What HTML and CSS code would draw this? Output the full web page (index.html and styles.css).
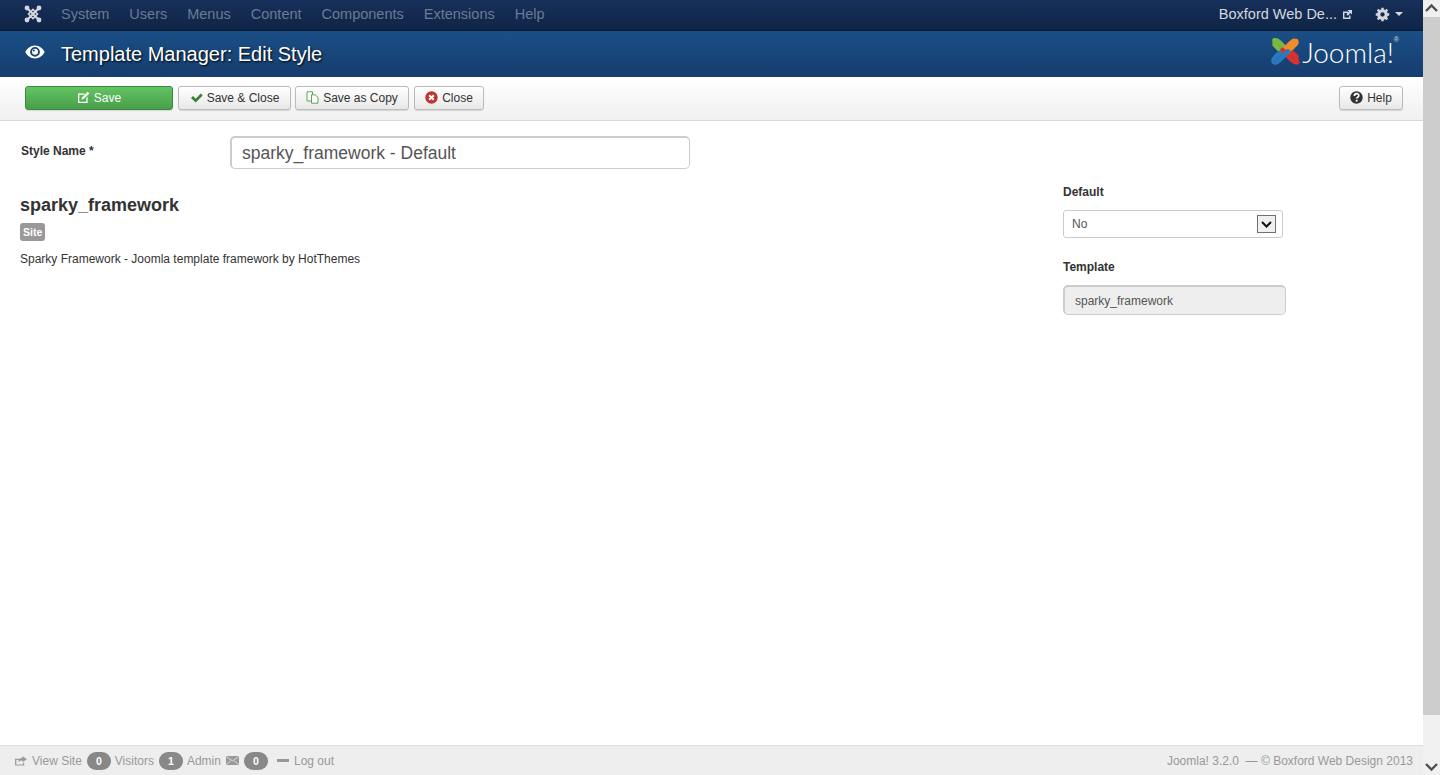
FILE: index.html
```html
<!DOCTYPE html>
<html lang="en">
<head>
<meta charset="utf-8">
<title>Template Manager: Edit Style</title>
<link rel="stylesheet" href="styles.css">
</head>
<body>
<div class="window">
  <div class="page">
    <nav class="navbar">
      <svg class="nav-logo" viewBox="0 0 18 18" width="18" height="18"><g fill="none" stroke="#d4d8de" stroke-width="2.2"><path d="M3 3l12 12M15 3L3 15"/><path d="M9 4.5L13.5 9 9 13.5 4.5 9z" stroke-width="1.6"/></g><g fill="#d4d8de"><circle cx="3" cy="3" r="2.4"/><circle cx="15" cy="3" r="2.4"/><circle cx="3" cy="15" r="2.4"/><circle cx="15" cy="15" r="2.4"/></g></svg>
      <ul class="nav-menu">
        <li>System</li><li>Users</li><li>Menus</li><li>Content</li><li>Components</li><li>Extensions</li><li>Help</li>
      </ul>
      <div class="nav-right">
        <span class="site-name">Boxford Web De...</span>
        <svg class="ext-icon" viewBox="0 0 11 11" width="11" height="11"><path d="M1 2.5h5v1.4H2.4v4.7h4.7V6.5h1.4V10H1z" fill="#d4d8de"/><path d="M5.5 1H10v4.500L8.500 4 5.800 6.700 4.300 5.200 7 2.500z" fill="#d4d8de"/></svg>
        <svg class="gear-icon" viewBox="0 0 16 16" width="15" height="15"><circle cx="8" cy="8" r="4.200" fill="none" stroke="#d4d8de" stroke-width="3"/><path d="M8 .8v14.400M.8 8h14.400M2.900 2.900l10.200 10.200M13.100 2.900L2.900 13.100" stroke="#d4d8de" stroke-width="2.600"/><circle cx="8" cy="8" r="2.300" fill="#14294f"/></svg>
        <span class="caret"></span>
      </div>
    </nav>
    <header class="title-bar">
      <svg class="eye-icon" viewBox="0 0 20 14" width="20" height="14"><path d="M10 .5C5.500.5 2 3.500.3 7 2 10.500 5.500 13.500 10 13.500S18 10.500 19.700 7C18 3.500 14.500.5 10 .5zm0 11.300A4.900 4.900 0 1 1 10 2a4.900 4.900 0 0 1 0 9.800z" fill="#fff"/><circle cx="10" cy="6.800" r="3" fill="#fff"/><circle cx="8.800" cy="5.500" r="1.100" fill="#1a4a80"/></svg>
      <h1 class="page-title">Template Manager: Edit Style</h1>
      <div class="brand">
        <svg class="brand-mark" viewBox="0 0 32 32" width="31" height="31" fill="none" stroke-width="5" stroke-linecap="round">
          <path d="M5 4.500C8 4 9 6 11 8l9 9" stroke="#7ab93f"/><path d="M5 4.500V9l5 5" stroke="#7ab93f"/>
          <path d="M26.500 5.500c-2-1-3 0-5 2l-9 9" stroke="#f08c2b"/><path d="M27 5.500c1 2-1 3-3 5l-3 3" stroke="#f08c2b"/>
          <path d="M27 26c-3 .5-4-1-6-3l-9-9.500" stroke="#d9312d" transform="translate(1 1)"/><path d="M27 26v-4.500l-4-4" stroke="#d9312d"/>
          <path d="M4.500 27c2 1 3.500-.5 5-2l9-9" stroke="#2a78bd"/><path d="M4 26.500c-1-2 .5-3.500 2-5l4-4" stroke="#2a78bd"/>
        </svg>
        <span class="brand-name">Joomla!</span><span class="brand-reg">®</span>
      </div>
    </header>
    <div class="toolbar">
      <button class="btn btn-save" type="button">
        <svg viewBox="0 0 13 13" width="13" height="13"><path d="M1 2.500h7L6.800 3.800H2.300v7h7V7l1.300-1.300v6.400H1z" fill="#fff"/><path d="M10.600.8l1.700 1.700L6.700 8.100l-2.300.6.600-2.300z" fill="#fff"/></svg>
        Save
      </button>
      <button class="btn btn-wide" type="button">
        <svg viewBox="0 0 13 13" width="13" height="13"><path d="M1 7l2-2 2.700 2.700L10.800 2.500 12.700 4.500 5.700 11.500z" fill="#378137"/></svg>
        Save &amp; Close
      </button>
      <button class="btn btn-copy" type="button">
        <svg viewBox="0 0 13 13" width="13" height="13"><g fill="#fff" stroke="#56a556" stroke-width="1"><path d="M1 .8h5.500v9.200H1z"/><path d="M5.500 3.800h3.700L12 6.500v5.700H5.500z"/></g></svg>
        Save as Copy
      </button>
      <button class="btn btn-close" type="button">
        <svg viewBox="0 0 13 13" width="13" height="13"><circle cx="6.500" cy="6.500" r="6.200" fill="#bd362f"/><path d="M4.200 4.200l4.600 4.600M8.800 4.200L4.200 8.800" stroke="#fff" stroke-width="2"/></svg>
        Close
      </button>
      <button class="btn btn-help" type="button">
        <svg viewBox="0 0 13 13" width="13" height="13"><circle cx="6.500" cy="6.500" r="6.200" fill="#333"/><path d="M4.400 5c0-3 4.400-3 4.400-.4 0 1.600-2.100 1.600-2.100 3" fill="none" stroke="#fff" stroke-width="1.700"/><rect x="5.700" y="8.800" width="1.900" height="1.800" fill="#fff"/></svg>
        Help
      </button>
    </div>
    <main class="content">
      <div class="name-row">
        <label class="name-label">Style Name *</label>
        <div class="text-field name-field">sparky_framework - Default</div>
      </div>
      <div class="columns">
        <section class="info">
          <h2 class="info-title">sparky_framework</h2>
          <span class="label-site">Site</span>
          <p class="info-desc">Sparky Framework - Joomla template framework by HotThemes</p>
        </section>
        <aside class="side">
          <div class="side-label">Default</div>
          <div class="select-field">
            <span>No</span>
            <span class="select-arrow"><svg viewBox="0 0 11 7" width="11" height="7"><path d="M1 1l4.500 4.500L10 1" fill="none" stroke="#111" stroke-width="2"/></svg></span>
          </div>
          <div class="side-label side-label-second">Template</div>
          <div class="readonly-field">sparky_framework</div>
        </aside>
      </div>
    </main>
    <footer class="status">
      <div class="status-left">
        <svg class="st-share" viewBox="0 0 13 11" width="12" height="10"><path d="M0 3h5v1.300H1.300v5h7.400V7.500H10V10.500H0z" fill="#999"/><path d="M8 0l5 3.500L8 7V5C6 5 4.500 5.500 3.500 7c0-3 2-5 4.500-5z" fill="#999"/></svg>
        <span class="st-link">View Site</span>
        <span class="pill pill-first">0</span><span class="st-link">Visitors</span>
        <span class="pill">1</span><span class="st-link">Admin</span>
        <svg class="st-mail" viewBox="0 0 13 9" width="13" height="9"><rect width="13" height="9" rx="1" fill="#999"/><path d="M.5.800l6 4 6-4M.5 8.500L5 4.500M12.500 8.500L8 4.500" stroke="#eee" stroke-width=".8" fill="none"/></svg>
        <span class="pill">0</span>
        <span class="st-dash"></span>
        <span class="st-link">Log out</span>
      </div>
      <div class="status-right">Joomla! 3.2.0 &nbsp;— © Boxford Web Design 2013</div>
    </footer>
  </div>
  <div class="scrollbar">
    <svg class="sb-arrow" viewBox="0 0 17 17" width="17" height="17"><path d="M3 11l5.500-5.500L14 11" fill="none" stroke="#505050" stroke-width="2.400"/></svg>
    <div class="sb-track"><div class="sb-thumb"></div></div>
    <svg class="sb-arrow" viewBox="0 0 17 17" width="17" height="17"><path d="M3 6l5.500 5.500L14 6" fill="none" stroke="#505050" stroke-width="2.400"/></svg>
  </div>
</div>
</body>
</html>
```

FILE: styles.css
```css
* { box-sizing: border-box; }
html, body { margin: 0; padding: 0; height: 775px; overflow: hidden; background: #fff; }
body { font-family: "Liberation Sans", Arial, sans-serif; font-size: 12px; color: #333; }

.window { display: flex; width: 1440px; height: 775px; }
.page { flex: 0 0 1423px; display: flex; flex-direction: column; height: 775px; }

.navbar { flex: 0 0 31px; display: flex; align-items: center; padding: 0 20px 2px 24px; background: linear-gradient(#17305a, #0f2547); border-bottom: 1px solid #0a1a33; }
.nav-logo { flex: none; }
.nav-menu { display: flex; gap: 20px; list-style: none; margin: 0 0 0 19px; padding: 0; font-size: 14.500px; color: #6a7b93; }
.nav-right { margin-left: auto; display: flex; align-items: center; color: #d4d8de; }
.site-name { font-size: 14.500px; }
.ext-icon { margin-left: 5px; }
.gear-icon { margin-left: 22px; }
.caret { margin-left: 5px; width: 0; height: 0; border-left: 4px solid transparent; border-right: 4px solid transparent; border-top: 4px solid #d4d8de; }

.title-bar { flex: 0 0 46px; display: flex; align-items: center; padding: 0 24px 0 25px; background: linear-gradient(#1a4f86, #163c6e); }
.eye-icon { flex: none; margin-top: -4px; }
.page-title { margin: 0 0 0 16px; font-size: 20px; font-weight: 400; color: #fff; text-shadow: 1px 1px 2px #000; }
.brand { margin-left: auto; display: flex; align-items: center; margin-top: -5px; }
.brand-mark { flex: none; }
.brand-name { margin-left: 1px; font-family: Lato, "Open Sans", sans-serif; font-weight: 300; font-size: 28px; line-height: 32px; color: #fff; }
.brand-reg { align-self: flex-start; font-size: 7px; color: #ddd; }

.toolbar { flex: 0 0 44px; display: flex; align-items: center; padding: 0 20px 2px 25px; background: linear-gradient(#fff, #f0f0f0); border-bottom: 1px solid #d8d8d8; }
.btn { display: flex; align-items: center; justify-content: center; gap: 4px; height: 24px; padding: 0; margin-right: 5px; font-family: inherit; font-size: 12px; color: #333; border: 1px solid #bbb; border-radius: 3px; background: linear-gradient(#fff, #e8e8e8); box-shadow: 0 1px 1px rgba(0,0,0,.12); }
.btn-save { width: 148px; color: #fff; border-color: #3d8b3d; background: linear-gradient(#62c462, #4a9e4a); }
.btn-wide { width: 113px; margin-right: 4px; }
.btn-copy { width: 114px; }
.btn-close { width: 70px; margin-right: 0; }
.btn-help { width: 64px; margin-left: auto; margin-right: 0; }

.content { flex: 1; min-height: 0; padding: 15px 20px 0 20px; }
.name-row { display: flex; align-items: center; height: 33px; }
.name-label { flex: 0 0 210px; padding-left: 1px; margin-top: -3px; font-weight: 700; font-size: 12px; color: #333; }
.text-field { width: 460px; height: 33px; padding: 0 10px; display: flex; align-items: center; font-size: 17.500px; color: #555; border: 1px solid #ccc; border-top: 2px solid #ccc; border-left: 2px solid #ccc; border-radius: 5px; }
.columns { display: flex; justify-content: space-between; margin-top: 14px; }
.info { flex: 1; padding-top: 10px; }
.info-title { margin: 0; font-size: 18px; line-height: 24px; font-weight: 700; color: #333; }
.label-site { display: inline-block; margin-top: 6px; padding: 0 3px; height: 18px; line-height: 18px; font-size: 10.500px; font-weight: 700; color: #fff; background: #999; border-radius: 3px; }
.info-desc { margin: 9px 0 0; font-size: 12px; line-height: 18px; color: #333; }

.side { flex: 0 0 340px; padding-top: 0; }
.side-label { font-size: 12px; font-weight: 700; line-height: 18px; margin-bottom: 9px; color: #333; }
.side-label-second { margin-top: 20px; }
.select-field { display: flex; align-items: center; justify-content: space-between; width: 220px; height: 28px; padding: 0 6px 0 8px; font-size: 12px; color: #555; border: 1px solid #ccc; border-radius: 3px; }
.select-arrow { display: flex; align-items: center; justify-content: center; width: 19px; height: 18px; border: 1px solid #707070; background: #f0f0f0; }
.readonly-field { display: flex; align-items: center; width: 223px; height: 30px; padding: 0 10px; font-size: 12px; color: #555; background: #eee; border: 1px solid #ccc; border-top: 2px solid #ccc; border-left: 2px solid #ccc; border-radius: 5px; }

.status { flex: 0 0 30px; display: flex; align-items: center; justify-content: space-between; padding: 0 10px 0 15px; background: #eee; border-top: 1px solid #ddd; font-size: 12px; color: #999; }
.status-left { display: flex; align-items: center; }
.st-share { margin-right: 5px; }
.st-mail { margin: 0 5px; }
.st-dash { width: 12px; height: 3px; margin: 0 5px; background: #999; }
.pill { display: inline-block; width: 24px; height: 18px; margin-right: 4px; line-height: 18px; text-align: center; font-size: 10.500px; font-weight: 700; color: #fff; background: #888; border-radius: 9px; }
.pill-first { margin-left: 10px; }
.st-link + .pill { margin-left: 5px; }

.scrollbar { flex: 0 0 17px; display: flex; flex-direction: column; background: #f0f0f0; }
.sb-arrow { flex: none; display: block; }
.sb-track { flex: 1; }
.sb-thumb { height: 698px; background: #cdcdcd; }
```
